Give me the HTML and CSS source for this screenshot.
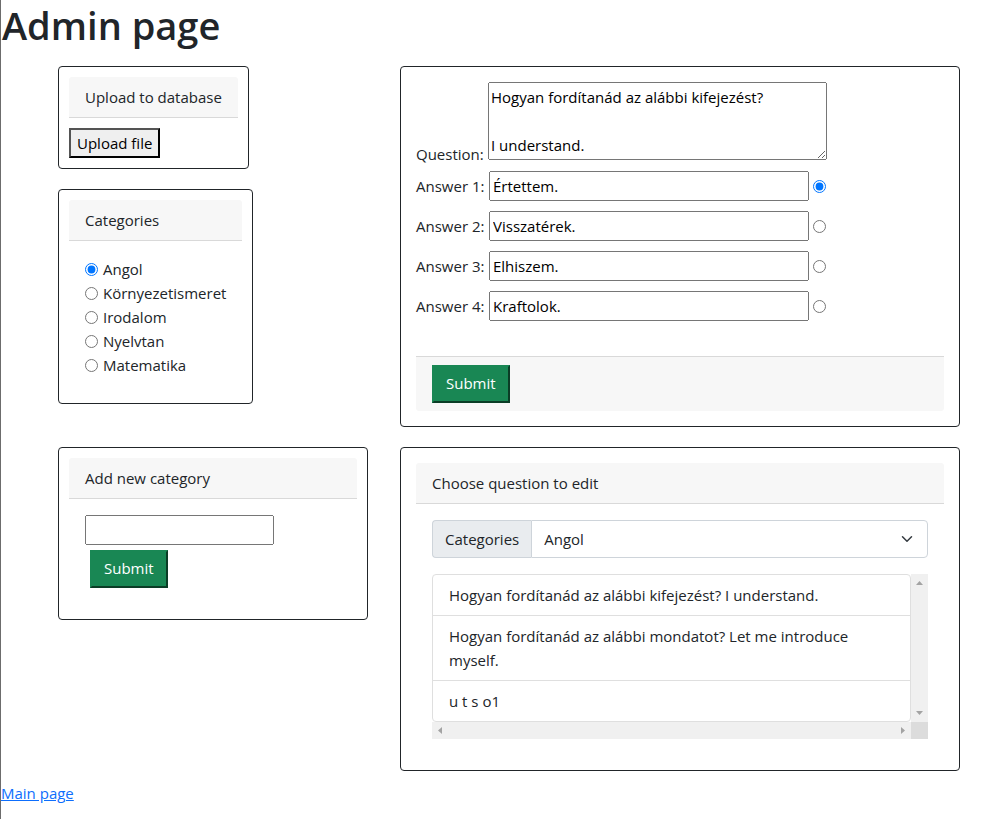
FILE: index.html
```
<!DOCTYPE html>
<html lang="hu">
<head>
<meta charset="utf-8">
<meta name="viewport" content="width=device-width, initial-scale=1">
<title>Admin page</title>
<link rel="stylesheet" href="styles.css">
</head>
<body>
<h1>Admin page</h1>
<main class="board">
  <div class="stack">
    <section class="card">
      <div class="card-header">Upload to database</div>
      <button type="button" class="upload">Upload file</button>
    </section>
    <section class="card">
      <div class="card-header">Categories</div>
      <div class="card-body">
        <label class="option"><input type="radio" name="category" checked>Angol</label>
        <label class="option"><input type="radio" name="category">Környezetismeret</label>
        <label class="option"><input type="radio" name="category">Irodalom</label>
        <label class="option"><input type="radio" name="category">Nyelvtan</label>
        <label class="option"><input type="radio" name="category">Matematika</label>
      </div>
    </section>
  </div>

  <form class="card card-roomy">
    <div class="field field-question">
      <label for="question">Question:</label>
      <textarea id="question" rows="3">Hogyan fordítanád az alábbi kifejezést?

I understand.</textarea>
    </div>
    <div class="answers">
      <div class="field">
        <label for="a1">Answer 1:</label>
        <input type="text" id="a1" value="Értettem.">
        <input type="radio" name="correct" aria-label="Answer 1 is correct" checked>
      </div>
      <div class="field">
        <label for="a2">Answer 2:</label>
        <input type="text" id="a2" value="Visszatérek.">
        <input type="radio" name="correct" aria-label="Answer 2 is correct">
      </div>
      <div class="field">
        <label for="a3">Answer 3:</label>
        <input type="text" id="a3" value="Elhiszem.">
        <input type="radio" name="correct" aria-label="Answer 3 is correct">
      </div>
      <div class="field">
        <label for="a4">Answer 4:</label>
        <input type="text" id="a4" value="Kraftolok.">
        <input type="radio" name="correct" aria-label="Answer 4 is correct">
      </div>
    </div>
    <div class="card-footer"><button type="button" class="submit">Submit</button></div>
  </form>

  <form class="card">
    <div class="card-header">Add new category</div>
    <div class="card-body">
      <input type="text" class="new-category" aria-label="New category">
      <button type="button" class="submit submit-spaced">Submit</button>
    </div>
  </form>

  <section class="card card-roomy">
    <div class="card-header">Choose question to edit</div>
    <div class="card-body">
      <div class="input-group">
        <label for="filter">Categories</label>
        <div class="select-wrap">
          <select id="filter">
            <option>Angol</option>
            <option>Környezetismeret</option>
            <option>Irodalom</option>
            <option>Nyelvtan</option>
            <option>Matematika</option>
          </select>
          <svg class="chevron" viewBox="0 0 16 16" aria-hidden="true"><path d="M2 5l6 6 6-6"/></svg>
        </div>
      </div>
      <div class="scroller">
        <ul class="questions">
          <li>Hogyan fordítanád az alábbi kifejezést? I understand.</li>
          <li>Hogyan fordítanád az alábbi mondatot? Let me introduce myself.</li>
          <li>u t s o1</li>
        </ul>
        <div class="bar bar-y">
          <svg viewBox="0 0 17 17" aria-hidden="true"><path d="M5 11h7L8.500 7z"/></svg>
          <svg viewBox="0 0 17 17" aria-hidden="true"><path d="M5 6h7L8.500 10z"/></svg>
        </div>
        <div class="bar bar-x">
          <svg viewBox="0 0 17 17" aria-hidden="true"><path d="M10 5v7L6 8.500z"/></svg>
          <svg viewBox="0 0 17 17" aria-hidden="true"><path d="M7 5v7l4-3.500z"/></svg>
        </div>
        <div class="corner"></div>
      </div>
    </div>
  </section>
</main>
<a class="home" href="#">Main page</a>
</body>
</html>
```
FILE: styles.css
```
* { box-sizing: border-box; }

body {
  margin: 0;
  min-height: 100vh;
  border-left: 1px solid #6c6c6c;
  background: #fff;
  color: #212529;
  font: 15px/24px "Segoe UI", "Open Sans", sans-serif;
}

h1 {
  margin: 0 0 16px;
  padding-left: 1px;
  font-size: 38px;
  line-height: 50px;
  font-weight: 600;
}

button, input, textarea, select {
  margin: 0;
  font: inherit;
}

input[type="text"], textarea { color: #000; }

input[type="radio"] {
  flex: none;
  width: 13px;
  height: 13px;
}

.board {
  display: grid;
  grid-template-columns: 310fr 560fr;
  gap: 20px 32px;
  align-items: start;
  padding: 0 32px 0 57px;
}

.stack {
  display: flex;
  flex-direction: column;
  align-items: flex-start;
  gap: 20px;
}

.card {
  padding: 10px;
  border: 1px solid #212529;
  border-radius: 4px;
}

.card-roomy { padding: 15px; }

.card-header {
  padding: 8px 16px;
  background: #f7f7f7;
  border-bottom: 1px solid #d9d9d9;
  border-radius: 3px 3px 0 0;
}

.card-body { padding: 16px; }

.card-footer {
  margin-top: 35px;
  padding: 8px 16px;
  background: #f7f7f7;
  border-top: 1px solid #d9d9d9;
  border-radius: 0 0 3px 3px;
}

.upload {
  display: block;
  height: 30px;
  margin-top: 10px;
  padding: 1px 6px;
  border: 2px outset #000;
  background: #efefef;
  color: #000;
}

.option {
  display: flex;
  align-items: center;
  gap: 5px;
}

.field {
  display: flex;
  align-items: center;
}

.field label { width: 73px; }

.field input[type="text"] {
  width: 320px;
  height: 30px;
  margin-right: 4px;
}

.field-question { align-items: flex-end; }
.field-question label { width: 72px; }

textarea {
  width: 339px;
  height: 78px;
  padding: 2px;
  overflow: auto;
  resize: both;
}

.field-question textarea { margin-bottom: 6px; }

.answers {
  display: flex;
  flex-direction: column;
  gap: 10px;
  margin-top: 5px;
}

.submit {
  display: block;
  height: 38px;
  padding: 4px 12px 6px;
  border: 2px solid;
  border-color: #198754 #0b3d26 #0b3d26 #198754;
  background: #198754;
  color: #fff;
}

.submit-spaced { margin: 5px; }

.new-category {
  display: block;
  width: 189px;
  height: 30px;
}

.input-group { display: flex; }

.input-group label {
  padding: 6px 12px;
  background: #e9ecef;
  border: 1px solid #ced4da;
  border-right: 0;
  border-radius: 4px 0 0 4px;
}

.select-wrap {
  position: relative;
  flex: 1;
}

.select-wrap select {
  display: block;
  width: 100%;
  height: 38px;
  padding: 6px 36px 6px 12px;
  appearance: none;
  border: 1px solid #ced4da;
  border-radius: 0 4px 4px 0;
  background: #fff;
  color: #212529;
}

.chevron {
  position: absolute;
  right: 15px;
  top: 13px;
  width: 12px;
  height: 12px;
  fill: none;
  stroke: #343a40;
  stroke-width: 2;
  stroke-linecap: round;
  stroke-linejoin: round;
  pointer-events: none;
}

.scroller {
  display: grid;
  grid-template-columns: 1fr 17px;
  grid-template-rows: auto 17px;
  margin-top: 16px;
}

.questions {
  margin: 0;
  padding: 0;
  list-style: none;
  border: 1px solid #dfdfdf;
  border-radius: 4px;
}

.questions li { padding: 8px 16px; }
.questions li + li { border-top: 1px solid #dfdfdf; }

.bar {
  display: flex;
  justify-content: space-between;
  background: #f0f0f0;
}

.bar-y { flex-direction: column; }

.bar svg {
  width: 17px;
  height: 17px;
  fill: #a3a3a3;
}

.corner { background: #dcdcdc; }

.home {
  display: inline-block;
  margin-top: 10px;
  color: #0d6efd;
}
```
